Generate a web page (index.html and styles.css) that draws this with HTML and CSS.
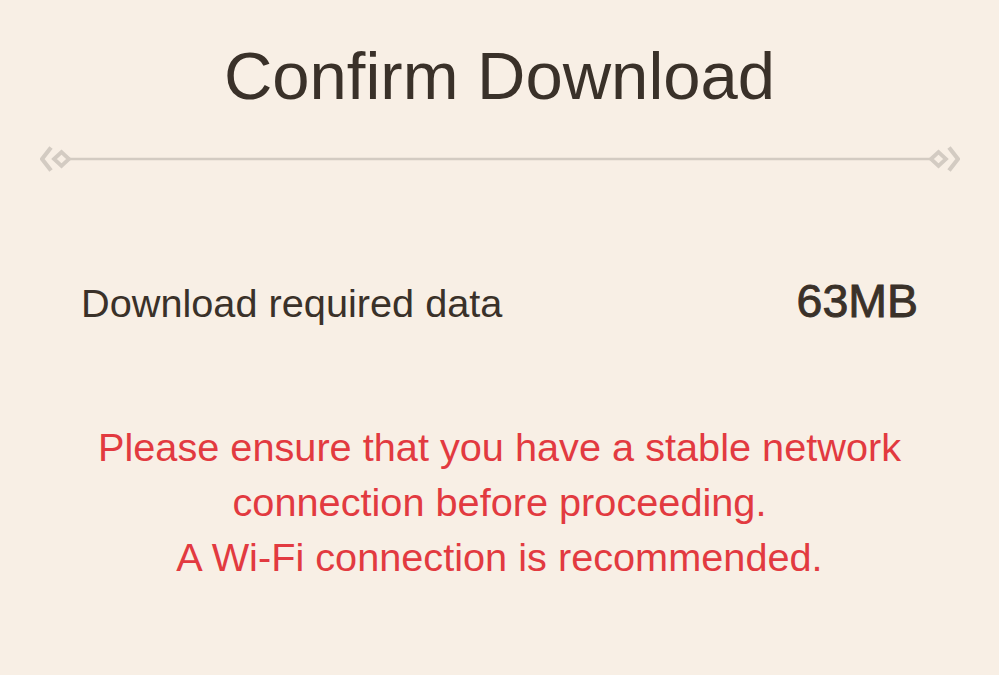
FILE: index.html
```html
<!DOCTYPE html>
<html lang="en">
<head>
  <meta charset="UTF-8" />
  <meta name="viewport" content="width=device-width, initial-scale=1.0"/>
  <title>Confirm Download</title>
  <link rel="stylesheet" href="styles.css">
</head>
<body>

  <div class="dialog">
    <h1 class="dialog-title">Confirm Download</h1>

    <!-- ornamental divider -->
    <svg class="divider" viewBox="0 0 920 30" width="920" height="30">
      <g fill="none" stroke="#d3cbc2" stroke-width="3.8">
        <polyline points="11,3.5 2,15 11,26.5" stroke-width="4.2" />
        <polygon points="14,15 21.5,8 29,15 21.5,22" />
        <line x1="29" y1="15" x2="891" y2="15" stroke-width="2.5" />
        <polygon points="891,15 898.5,8 906,15 898.5,22" />
        <polyline points="909,3.5 918,15 909,26.5" stroke-width="4.2" />
      </g>
    </svg>

    <div class="size-row">
      <span class="size-label">Download required data</span>
      <span class="size-value">63MB</span>
    </div>

    <p class="warning">
      Please ensure that you have a stable network<br>
      connection before proceeding.<br>
      A Wi-Fi connection is recommended.
    </p>
  </div>

</body>
</html>
```

FILE: styles.css
```css
body {
  margin: 0;
  padding: 0;
  background: #f8efe5;
  font-family: "Liberation Sans", Arial, sans-serif;
  color: #3a3129;
}

.dialog {
  min-height: 675px;
  display: flex;
  flex-direction: column;
  align-items: center;
  padding-top: 36px;
  box-sizing: border-box;
}

.dialog-title {
  margin: 0;
  font-size: 67px;
  line-height: 80px;
  font-weight: normal;
  color: #3a3129;
}

.divider {
  display: block;
  margin-top: 28px;
}

.size-row {
  align-self: stretch;
  display: flex;
  justify-content: space-between;
  align-items: baseline;
  margin-top: 102px;
  padding: 0 81px;
  line-height: 50px;
}

.size-label {
  font-size: 39.7px;
}

.size-value {
  font-size: 46.5px;
  -webkit-text-stroke: 0.9px #3a3129;
}

.warning {
  margin: 92px 0 0;
  font-size: 39.7px;
  line-height: 55px;
  text-align: center;
  color: #e23a40;
}
```
